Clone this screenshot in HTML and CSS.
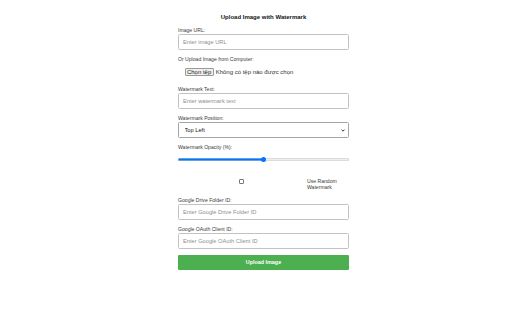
FILE: index.html
```html
<!DOCTYPE html>
<html lang="vi">
<head>
<meta charset="utf-8">
<title>Upload Image with Watermark</title>
<link rel="stylesheet" href="styles.css">
</head>
<body>
<div class="page">
  <h2 class="title">Upload Image with Watermark</h2>

  <div class="group g-url">
    <label class="lbl">Image URL:</label>
    <input class="field" type="text" placeholder="Enter image URL">
  </div>

  <div class="group g-file">
    <label class="lbl">Or Upload Image from Computer:</label>
    <div class="file-row">
      <span class="file-btn">Chọn tệp</span>
      <span class="file-text">Không có tệp nào được chọn</span>
    </div>
  </div>

  <div class="group">
    <label class="lbl">Watermark Text:</label>
    <input class="field" type="text" placeholder="Enter watermark text">
  </div>

  <div class="group">
    <label class="lbl">Watermark Position:</label>
    <div class="select-wrap">
      <select class="field select">
        <option>Top Left</option>
        <option>Top Right</option>
        <option>Bottom Left</option>
        <option>Bottom Right</option>
        <option>Center</option>
      </select>
      <svg class="chev" width="4" height="3" viewBox="0 0 8 6"><path d="M1 1.2 L4 4.4 L7 1.2" fill="none" stroke="#222" stroke-width="1.8"/></svg>
    </div>
  </div>

  <div class="group g-range">
    <label class="lbl">Watermark Opacity (%):</label>
    <input class="range" type="range" min="0" max="100" value="50">
  </div>

  <div class="check-row">
    <div class="check-cell"><input class="check" type="checkbox"></div>
    <label class="check-lbl">Use Random Watermark</label>
  </div>

  <div class="group">
    <label class="lbl">Google Drive Folder ID:</label>
    <input class="field" type="text" placeholder="Enter Google Drive Folder ID">
  </div>

  <div class="group">
    <label class="lbl">Google OAuth Client ID:</label>
    <input class="field" type="text" placeholder="Enter Google OAuth Client ID">
  </div>

  <button class="submit" type="button">Upload Image</button>
</div>
</body>
</html>
```

FILE: styles.css
```css
html, body {
  margin: 0;
  padding: 0;
  background: #ffffff;
}

body {
  font-family: "Liberation Sans", Arial, sans-serif;
  font-size: 6px;
  color: #333333;
}

.page {
  width: 171px;
  margin: 0 auto;
  padding: 13px 0 0 15px;
}

.title {
  margin: 0 0 5.5px 0;
  font-size: 6px;
  line-height: 8px;
  font-weight: bold;
  text-align: center;
  color: #111111;
}

.group {
  display: flex;
  flex-direction: column;
  margin-bottom: 6px;
}

.g-url { margin-bottom: 6.5px; }
.g-file { margin-bottom: 10px; }
.g-range { margin-bottom: 13.5px; }

.lbl {
  display: block;
  font-size: 5.1px;
  line-height: 6px;
  margin-bottom: 1px;
  color: #3a3a3a;
}

.field {
  display: block;
  box-sizing: border-box;
  width: 171px;
  height: 16px;
  margin: 0;
  padding: 0 0 0 4px;
  border: 1px solid #c2c2c2;
  border-radius: 1.5px;
  font-family: "Liberation Sans", Arial, sans-serif;
  font-size: 5.7px;
  color: #222222;
  background: #ffffff;
  outline: none;
}

.field::placeholder {
  color: #8e8e8e;
}

.file-row {
  display: flex;
  align-items: center;
  margin-top: 4px;
  padding-left: 6.5px;
  height: 9px;
}

.file-btn {
  box-sizing: border-box;
  height: 8px;
  padding: 0 1.4px;
  display: flex;
  align-items: center;
  background: #efefef;
  border: 0.8px solid #9a9a9a;
  border-radius: 1px;
  font-size: 6px;
  color: #222222;
}

.file-text {
  margin-left: 2px;
  font-size: 6px;
  color: #333333;
}

.select-wrap {
  position: relative;
  width: 171px;
  height: 16px;
}

.select {
  appearance: none;
  -webkit-appearance: none;
  padding-left: 5.5px;
  color: #111111;
  border-color: #a5a5a5;
}

.chev {
  position: absolute;
  right: 4px;
  top: 7px;
}

.range {
  display: block;
  -webkit-appearance: none;
  appearance: none;
  width: 171px;
  height: 9px;
  margin: 4px 0 0 0;
  padding: 0;
  background: transparent;
}

.range::-webkit-slider-runnable-track {
  height: 2.4px;
  border-radius: 2px;
  background: linear-gradient(to right, #0075ff 0%, #0075ff 50%, #efefef 50%, #efefef 100%);
  box-shadow: inset 0 0 0 0.6px #c9c9c9;
}

.range::-webkit-slider-thumb {
  -webkit-appearance: none;
  appearance: none;
  width: 5.5px;
  height: 5.5px;
  margin-top: -1.55px;
  border-radius: 50%;
  background: #0075ff;
  border: none;
}

.check-row {
  display: flex;
  align-items: flex-start;
  width: 171px;
  margin-bottom: 7px;
}

.check-cell {
  flex: 1;
  display: flex;
  justify-content: center;
  padding-top: 1px;
  padding-right: 2px;
}

.check {
  appearance: none;
  -webkit-appearance: none;
  box-sizing: border-box;
  width: 5px;
  height: 5px;
  margin: 0;
  border: 0.8px solid #767676;
  border-radius: 1px;
  background: #ffffff;
}

.check-lbl {
  width: 42px;
  font-size: 5.1px;
  line-height: 6px;
  color: #3a3a3a;
}

.submit {
  display: block;
  box-sizing: border-box;
  width: 171px;
  height: 15px;
  margin: 0;
  padding: 0;
  border: none;
  border-radius: 1px;
  background: #4caf50;
  color: #ffffff;
  font-family: "Liberation Sans", Arial, sans-serif;
  font-size: 5.4px;
  font-weight: bold;
}
```
